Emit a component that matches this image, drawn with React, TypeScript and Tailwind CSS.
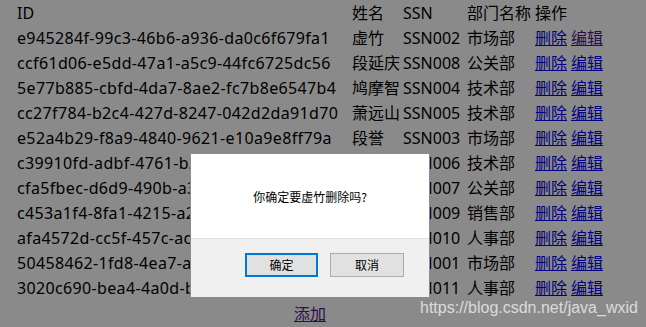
import React from "react";

const rows = [
  ["e945284f-99c3-46b6-a936-da0c6f679fa1", "虚竹", "SSN002", "市场部"],
  ["ccf61d06-e5dd-47a1-a5c9-44fc6725dc56", "段延庆", "SSN008", "公关部"],
  ["5e77b885-cbfd-4da7-8ae2-fc7b8e6547b4", "鸠摩智", "SSN004", "技术部"],
  ["cc27f784-b2c4-427d-8247-042d2da91d70", "萧远山", "SSN005", "技术部"],
  ["e52a4b29-f8a9-4840-9621-e10a9e8ff79a", "段誉", "SSN003", "市场部"],
  ["c39910fd-adbf-4761-b2c1-3a7c0e9d4f12", "乔峰", "SSN006", "技术部"],
  ["cfa5fbec-d6d9-490b-a3e2-7c61d9b0a845", "慕容复", "SSN007", "公关部"],
  ["c453a1f4-8fa1-4215-a2d8-95c3e7b1f064", "阿朱", "SSN009", "销售部"],
  ["afa4572d-cc5f-457c-ac19-b4e2d8f07a31", "王语嫣", "SSN010", "人事部"],
  ["50458462-1fd8-4ea7-a6b3-e2c9f5d17084", "木婉清", "SSN001", "市场部"],
  ["3020c690-bea4-4a0d-b8f1-d3a6e0c42597", "钟灵", "SSN011", "人事部"],
];

export default function App() {
  return (
    <div
      className="relative w-[646px] h-[327px] overflow-hidden bg-white text-black text-[16px]"
      style={{ fontFamily: '"Noto Sans", "Noto Sans CJK SC", sans-serif' }}
    >
      <div className="pl-[17px] pt-[1px]">
        <div className="flex h-[25px] items-center leading-[21px]">
          <div className="w-[335px]">ID</div>
          <div className="w-[51px]">姓名</div>
          <div className="w-[64px]">SSN</div>
          <div className="w-[68px]">部门名称</div>
          <div>操作</div>
        </div>
        {rows.map((r, i) => (
          <div key={i} className="flex h-[25px] items-center leading-[21px] whitespace-nowrap">
            <div className="w-[335px] tracking-[0.35px]">{r[0]}</div>
            <div className="w-[51px]">{r[1]}</div>
            <div className="w-[64px]">{r[2]}</div>
            <div className="w-[68px]">{r[3]}</div>
            <div className="flex gap-[4px]">
              <a href="#" className="underline text-[#0000ee]">删除</a>
              <a href="#" className={i === 0 ? "underline text-[#551a8b]" : "underline text-[#0000ee]"}>编辑</a>
            </div>
          </div>
        ))}
        <div className="flex h-[25px] items-center justify-center w-[586px]">
          <a href="#" className="underline text-[#551a8b]">添加</a>
        </div>
      </div>

      <div className="absolute inset-0 bg-[rgba(0,0,0,0.46)]" />

      <div className="absolute left-[190px] top-[153px] w-[240px] h-[145px] border border-[#8c8c8c] bg-white flex flex-col text-[12px]"
        style={{ fontFamily: '"Noto Sans CJK SC", "Noto Sans", sans-serif' }}
      >
        <div className="h-[84px] flex items-center justify-center pt-[2px] text-black">你确定要虚竹删除吗?</div>
        <div className="flex-1 bg-[#f0f0f0] border-t border-[#dfdfdf] flex justify-end items-start pt-[14px] pr-[25px] gap-[12px]">
          <button className="w-[73px] h-[24px] border-2 border-[#0078d7] bg-[#e1e1e1] text-black leading-none">确定</button>
          <button className="w-[74px] h-[24px] border border-[#adadad] bg-[#e1e1e1] text-black leading-none">取消</button>
        </div>
      </div>

      <div
        className="absolute left-[420px] top-[299px] text-[16px] leading-[18px] text-[rgba(235,235,235,0.85)] whitespace-nowrap"
        style={{ fontFamily: '"Liberation Sans", Arial, sans-serif' }}
      >
        https://blog.csdn.net/java_wxid
      </div>
    </div>
  );
}
